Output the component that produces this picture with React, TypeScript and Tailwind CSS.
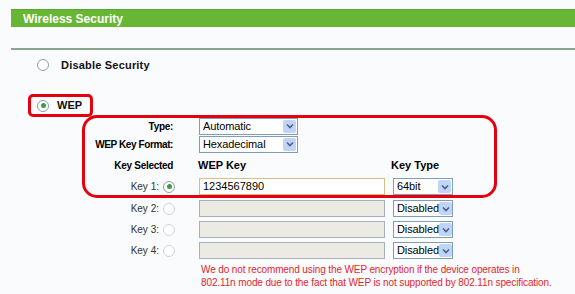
import React from "react";

function Radio({ checked = false, disabled = false }: { checked?: boolean; disabled?: boolean }) {
  return (
    <span
      className={`flex h-[12px] w-[12px] shrink-0 items-center justify-center rounded-full border bg-white ${
        disabled ? "border-[#cfd4da]" : "border-[#8d9bb0]"
      }`}
    >
      {checked && <span className="h-[5px] w-[5px] rounded-full bg-[#3d9c3d]" />}
    </span>
  );
}

function Select({ value, width }: { value: string; width: string }) {
  return (
    <div className={`flex h-[17px] items-center border border-[#7f9db9] bg-white ${width}`}>
      <span className="flex-1 whitespace-nowrap pl-[3px] text-[11px] leading-none tracking-[-0.1px] text-black">{value}</span>
      <span className="mr-[1px] flex h-[13px] w-[13px] shrink-0 items-center justify-center rounded-[2px] bg-[#c1d3f6]">
        <svg width="8" height="6" viewBox="0 0 8 6">
          <path d="M1 1.5 L4 4.5 L7 1.5" fill="none" stroke="#4a5f8a" strokeWidth="1.6" />
        </svg>
      </span>
    </div>
  );
}

function KeyRow({ n, value, disabled }: { n: number; value?: string; disabled?: boolean }) {
  return (
    <div className="flex h-[17px] items-center">
      <div className="flex w-[92px] items-center justify-end gap-[4px] pr-[2px]">
        <span className="text-[10px] text-[#333]">Key {n}:</span>
        <Radio checked={!disabled} disabled={disabled} />
      </div>
      <div
        className={`ml-[22px] flex h-[17px] w-[186px] items-center border pl-[3px] text-[11px] ${
          disabled ? "border-[#a7b0ba] bg-[#ebeae3]" : "border-[#d9bd83] bg-white"
        }`}
      >
        {value}
      </div>
      <div className="ml-[8px]">
        <Select value={disabled ? "Disabled" : "64bit"} width="w-[60px]" />
      </div>
    </div>
  );
}

export default function App() {
  return (
    <div
      className="h-[294px] w-[575px] overflow-hidden bg-[#fafbfc] pt-[9px]"
      style={{ fontFamily: '"Liberation Sans", Arial, sans-serif' }}
    >
      <div className="ml-[11px] h-[18px] border-t border-[#5aa52c] bg-[#67b634] pl-[12px] text-[12px] font-bold leading-[18px] text-white">
        Wireless Security
      </div>
      <div className="ml-[11px] mt-[21px] h-[2px] bg-[#86a98e]" />

      <div className="ml-[37px] mt-[9px] flex h-[12px] items-center">
        <Radio />
        <span className="ml-[12px] text-[11px] font-bold tracking-[0.2px] text-[#111]">Disable Security</span>
      </div>

      <div className="ml-[28px] mt-[23px] flex h-[23px] w-[65px] items-center rounded-[5px] border-[3px] border-[#e3000f] pl-[6px]">
        <Radio checked />
        <span className="ml-[8px] text-[11px] font-bold text-[#111]">WEP</span>
      </div>

      <div className="-mt-[2px] ml-[82px] w-[415px]">
        <div className="rounded-[15px] border-[3px] border-[#e3000f]">
          <div className="flex h-[16px] items-center">
            <div className="w-[88px] text-right text-[10px] font-bold tracking-[-0.3px]">Type:</div>
            <div className="ml-[26px]">
              <Select value="Automatic" width="w-[99px]" />
            </div>
          </div>
          <div className="mt-[2px] flex h-[16px] items-center">
            <div className="w-[88px] text-right text-[10px] font-bold tracking-[-0.4px]">WEP Key Format:</div>
            <div className="ml-[26px]">
              <Select value="Hexadecimal" width="w-[99px]" />
            </div>
          </div>
          <div className="mt-[5px] flex h-[16px] items-center text-[11px] font-bold">
            <div className="w-[88px] text-right text-[10px] tracking-[-0.3px]">Key Selected</div>
            <div className="ml-[25px] w-[193px]">WEP Key</div>
            <div>Key Type</div>
          </div>
          <div className="mt-[5px]">
            <KeyRow n={1} value="1234567890" />
          </div>
        </div>
        <div className="px-[3px]">
          <div className="mt-[2px]">
            <KeyRow n={2} disabled />
          </div>
          <div className="mt-[4px]">
            <KeyRow n={3} disabled />
          </div>
          <div className="mt-[4px]">
            <KeyRow n={4} disabled />
          </div>
          <div className="ml-[116px] mt-[4px] whitespace-nowrap text-[10px] leading-[13px] tracking-[-0.12px] text-[#e4262f]">
            We do not recommend using the WEP encryption if the device operates in
            <br />
            802.11n mode due to the fact that WEP is not supported by 802.11n specification.
          </div>
        </div>
      </div>
    </div>
  );
}
